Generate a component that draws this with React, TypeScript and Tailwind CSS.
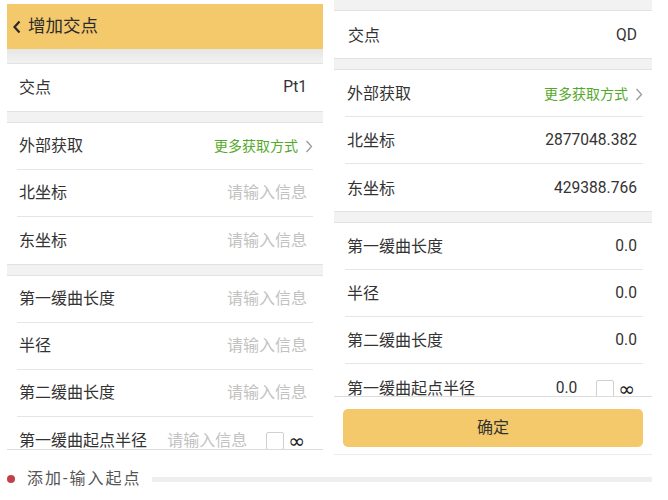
import React from "react";

const font = "font-['Roboto','Noto_Sans_CJK_SC',sans-serif]";

type RowProp = {
  label: string;
  value?: string;
  placeholder?: boolean;
  last?: boolean;
  shift?: boolean;
  children?: React.ReactNode;
};

function Row({ label, value, placeholder, last, shift, children }: RowProp) {
  return (
    <div className={`flex h-[47px] items-center ${shift ? "pt-[2px]" : ""} ${last ? "" : "border-b border-[#e6e6e6]"}`}>
      <span className="ml-[2px] text-[16px] text-[#333]">{label}</span>
      <div className="ml-auto flex items-center">
        {children ? (
          children
        ) : (
          <span className={`mr-[6px] ${placeholder ? "text-[16px] text-[#c2c2c2]" : "text-[15.6px] text-[#333]"}`}>{value}</span>
        )}
      </div>
    </div>
  );
}

function Chevron() {
  return (
    <svg width="8" height="13" viewBox="0 0 8 13" className="ml-[7px]">
      <polyline points="1.5,1 6.5,6.5 1.5,12" fill="none" stroke="#9a9a9a" strokeWidth="1.3" />
    </svg>
  );
}

function Group({ children, inset }: { children: React.ReactNode; inset: string }) {
  return <div className={`border-y border-[#e2e2e2] bg-white ${inset}`}>{children}</div>;
}

function MoreWays() {
  return (
    <div className="flex items-center">
      <span className="text-[14px] text-[#55a92a]">更多获取方式</span>
      <Chevron />
    </div>
  );
}

function LastRow({ value, placeholder, shift }: { value: string; placeholder?: boolean; shift?: boolean }) {
  return (
    <div className={`flex h-[47px] items-center ${shift ? "pt-[2px]" : ""}`}>
      <span className="ml-[2px] text-[16px] text-[#333]">第一缓曲起点半径</span>
      <span className={`ml-auto ${placeholder ? "text-[16px] text-[#c2c2c2]" : "text-[15.6px] text-[#333]"}`}>{value}</span>
      <span className="ml-[19px] h-[18px] w-[18px] rounded-[2px] border border-[#d0d0d0] bg-white" />
      <span className="ml-[4px] mr-[8px] text-[20px] leading-none text-[#222] font-['DejaVu_Sans',sans-serif]">∞</span>
    </div>
  );
}

export default function App() {
  return (
    <div className={`h-[500px] w-[668px] overflow-hidden bg-white ${font}`}>
      <div className="flex items-start">
        {/* left screen */}
        <div className="ml-[7px] mt-[4px] h-[446px] w-[316px] overflow-hidden border-b border-[#dcdcdc] bg-[#f2f2f2]">
          <div className="flex h-[45px] items-center bg-[#f3c96c] pl-[5px]">
            <svg width="10" height="14" viewBox="0 0 10 14">
              <polyline points="7.5,1.5 2.5,7 7.5,12.5" fill="none" stroke="#2a2a2a" strokeWidth="2.2" />
            </svg>
            <span className="ml-[6px] text-[17.5px] text-[#2b2b2b]">增加交点</span>
          </div>
          <div className="h-[14px] bg-gradient-to-b from-[#e6e6e6] to-[#f2f2f2]" />
          <Group inset="px-[10px]">
            <Row label="交点" value="Pt1" last />
          </Group>
          <div className="h-[10px]" />
          <Group inset="px-[10px]">
            <Row label="外部获取">
              <MoreWays />
            </Row>
            <Row label="北坐标" value="请输入信息" placeholder />
            <Row label="东坐标" value="请输入信息" placeholder last />
          </Group>
          <div className="h-[10px]" />
          <Group inset="px-[10px]">
            <Row label="第一缓曲长度" value="请输入信息" placeholder />
            <Row label="半径" value="请输入信息" placeholder />
            <Row label="第二缓曲长度" value="请输入信息" placeholder />
            <LastRow value="请输入信息" placeholder />
          </Group>
        </div>

        {/* right screen */}
        <div className="ml-[11px] flex h-[455px] w-[318px] flex-col overflow-hidden bg-white">
          <div className="h-[397px] overflow-hidden border-b border-[#dcdcdc] bg-[#f2f2f2]">
            <div className="h-[10px]" />
            <Group inset="pl-[12px] pr-[9px]">
              <Row label="交点" value="QD" last shift />
            </Group>
            <div className="h-[10px]" />
            <Group inset="pl-[11px] pr-[9px]">
              <Row label="外部获取" shift>
                <MoreWays />
              </Row>
              <Row label="北坐标" value="2877048.382" shift />
              <Row label="东坐标" value="429388.766" last shift />
            </Group>
            <div className="h-[10px]" />
            <Group inset="pl-[11px] pr-[9px]">
              <Row label="第一缓曲长度" value="0.0" shift />
              <Row label="半径" value="0.0" shift />
              <Row label="第二缓曲长度" value="0.0" shift />
              <LastRow value="0.0" shift />
            </Group>
          </div>
          <div className="flex flex-1 items-start border-b border-[#ececec] px-[9px] pt-[12px]">
            <button className="h-[38px] w-full rounded-[5px] bg-[#f4c96b] text-[16px] text-[#333]">确定</button>
          </div>
        </div>
      </div>

      {/* caption */}
      <div className="mt-[12px] flex items-center">
        <span className="ml-[7px] h-[8px] w-[8px] rounded-full bg-[#c0414a]" />
        <span className="ml-[12px] text-[16px] tracking-[2px] text-[#555]">添加-输入起点</span>
        <span className="ml-[11px] h-[5px] w-[500px] bg-[#eeeeee]" />
      </div>
    </div>
  );
}
